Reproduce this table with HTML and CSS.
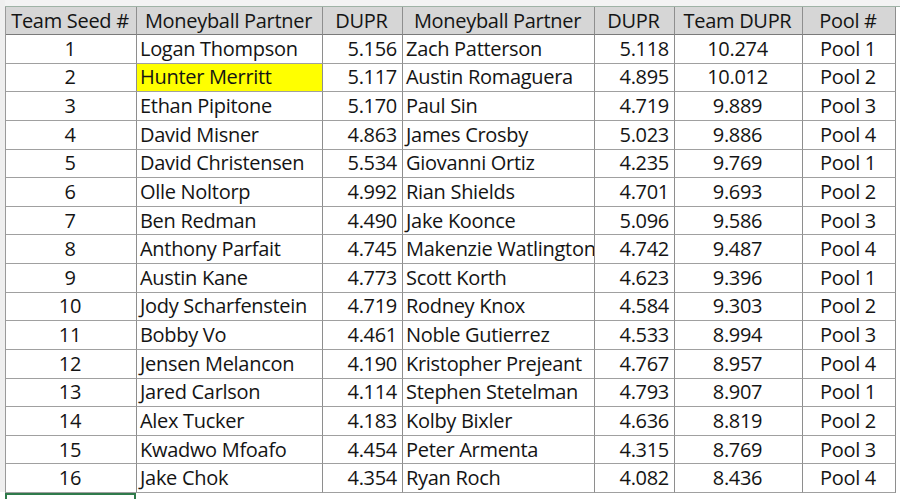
FILE: index.html
```html
<!DOCTYPE html>
<html>
<head>
<meta charset="utf-8">
<link rel="stylesheet" href="styles.css">
</head>
<body>
<div class="top-strip"></div>
<div class="main">
  <div class="gutter"></div>
  <div class="sheet">
    <div class="grid">
      <div class="cell head">Team Seed #</div><div class="cell head">Moneyball Partner</div><div class="cell head">DUPR</div><div class="cell head">Moneyball Partner</div><div class="cell head">DUPR</div><div class="cell head">Team DUPR</div><div class="cell head">Pool #</div>

      <div class="cell ctr">1</div><div class="cell lft">Logan Thompson</div><div class="cell rgt">5.156</div><div class="cell lft">Zach Patterson</div><div class="cell rgt">5.118</div><div class="cell ctr">10.274</div><div class="cell ctr">Pool 1</div>
      <div class="cell ctr">2</div><div class="cell lft hl">Hunter Merritt</div><div class="cell rgt">5.117</div><div class="cell lft">Austin Romaguera</div><div class="cell rgt">4.895</div><div class="cell ctr">10.012</div><div class="cell ctr">Pool 2</div>
      <div class="cell ctr">3</div><div class="cell lft">Ethan Pipitone</div><div class="cell rgt">5.170</div><div class="cell lft">Paul Sin</div><div class="cell rgt">4.719</div><div class="cell ctr">9.889</div><div class="cell ctr">Pool 3</div>
      <div class="cell ctr">4</div><div class="cell lft">David Misner</div><div class="cell rgt">4.863</div><div class="cell lft">James Crosby</div><div class="cell rgt">5.023</div><div class="cell ctr">9.886</div><div class="cell ctr">Pool 4</div>
      <div class="cell ctr">5</div><div class="cell lft">David Christensen</div><div class="cell rgt">5.534</div><div class="cell lft">Giovanni Ortiz</div><div class="cell rgt">4.235</div><div class="cell ctr">9.769</div><div class="cell ctr">Pool 1</div>
      <div class="cell ctr">6</div><div class="cell lft">Olle Noltorp</div><div class="cell rgt">4.992</div><div class="cell lft">Rian Shields</div><div class="cell rgt">4.701</div><div class="cell ctr">9.693</div><div class="cell ctr">Pool 2</div>
      <div class="cell ctr">7</div><div class="cell lft">Ben Redman</div><div class="cell rgt">4.490</div><div class="cell lft">Jake Koonce</div><div class="cell rgt">5.096</div><div class="cell ctr">9.586</div><div class="cell ctr">Pool 3</div>
      <div class="cell ctr">8</div><div class="cell lft">Anthony Parfait</div><div class="cell rgt">4.745</div><div class="cell lft">Makenzie Watlington</div><div class="cell rgt">4.742</div><div class="cell ctr">9.487</div><div class="cell ctr">Pool 4</div>
      <div class="cell ctr">9</div><div class="cell lft">Austin Kane</div><div class="cell rgt">4.773</div><div class="cell lft">Scott Korth</div><div class="cell rgt">4.623</div><div class="cell ctr">9.396</div><div class="cell ctr">Pool 1</div>
      <div class="cell ctr">10</div><div class="cell lft">Jody Scharfenstein</div><div class="cell rgt">4.719</div><div class="cell lft">Rodney Knox</div><div class="cell rgt">4.584</div><div class="cell ctr">9.303</div><div class="cell ctr">Pool 2</div>
      <div class="cell ctr">11</div><div class="cell lft">Bobby Vo</div><div class="cell rgt">4.461</div><div class="cell lft">Noble Gutierrez</div><div class="cell rgt">4.533</div><div class="cell ctr">8.994</div><div class="cell ctr">Pool 3</div>
      <div class="cell ctr">12</div><div class="cell lft">Jensen Melancon</div><div class="cell rgt">4.190</div><div class="cell lft">Kristopher Prejeant</div><div class="cell rgt">4.767</div><div class="cell ctr">8.957</div><div class="cell ctr">Pool 4</div>
      <div class="cell ctr">13</div><div class="cell lft">Jared Carlson</div><div class="cell rgt">4.114</div><div class="cell lft">Stephen Stetelman</div><div class="cell rgt">4.793</div><div class="cell ctr">8.907</div><div class="cell ctr">Pool 1</div>
      <div class="cell ctr">14</div><div class="cell lft">Alex Tucker</div><div class="cell rgt">4.183</div><div class="cell lft">Kolby Bixler</div><div class="cell rgt">4.636</div><div class="cell ctr">8.819</div><div class="cell ctr">Pool 2</div>
      <div class="cell ctr">15</div><div class="cell lft">Kwadwo Mfoafo</div><div class="cell rgt">4.454</div><div class="cell lft">Peter Armenta</div><div class="cell rgt">4.315</div><div class="cell ctr">8.769</div><div class="cell ctr">Pool 3</div>
      <div class="cell ctr">16</div><div class="cell lft">Jake Chok</div><div class="cell rgt">4.354</div><div class="cell lft">Ryan Roch</div><div class="cell rgt">4.082</div><div class="cell ctr">8.436</div><div class="cell ctr">Pool 4</div>
    </div>
    <div class="below">
      <div class="selected"></div>
    </div>
  </div>
</div>
</body>
</html>
```

FILE: styles.css
```css
html, body {
  margin: 0;
  padding: 0;
  background: #ffffff;
}
body {
  width: 900px;
  height: 499px;
  overflow: hidden;
  font-family: "Open Sans", "Liberation Sans", sans-serif;
  color: #141414;
}
.top-strip {
  height: 7px;
  background: #f3f3f3;
  border-bottom: 1px solid #9fb3a6;
  box-sizing: border-box;
  margin-left: 5px;
}
.main {
  display: flex;
}
.gutter {
  width: 5px;
  height: 492px;
  background: #efefef;
  margin-top: -7px;
  flex: none;
}
.sheet {
  flex: none;
}
.grid {
  display: grid;
  grid-template-columns: 131px 186px 80px 192px 80px 128px 93px;
  grid-template-rows: 28px repeat(16, 28.625px);
  border-left: 1px solid #9a9a9a;
  width: 891px;
  box-sizing: border-box;
  font-size: 20px;
  letter-spacing: -0.3px;
}
.cell {
  border-right: 1px solid #8e8e8e;
  border-bottom: 1px solid #a0a0a0;
  padding: 0 5px 0 3px;
  white-space: nowrap;
  overflow: hidden;
  display: flex;
  align-items: center;
  box-sizing: border-box;
  line-height: 1;
}
.head {
  background: #d6d6d6;
  justify-content: center;
  border-bottom-color: #7a7a7a;
}
.ctr { justify-content: center; }
.lft { justify-content: flex-start; padding-right: 1px; }
.rgt { justify-content: flex-end; }
.hl { background: #ffff00; }
.below {
  height: 8px;
  display: flex;
}
.selected {
  width: 131px;
  height: 8px;
  box-sizing: border-box;
  border: 2px solid #2f7a4b;
  border-bottom: none;
}
```
